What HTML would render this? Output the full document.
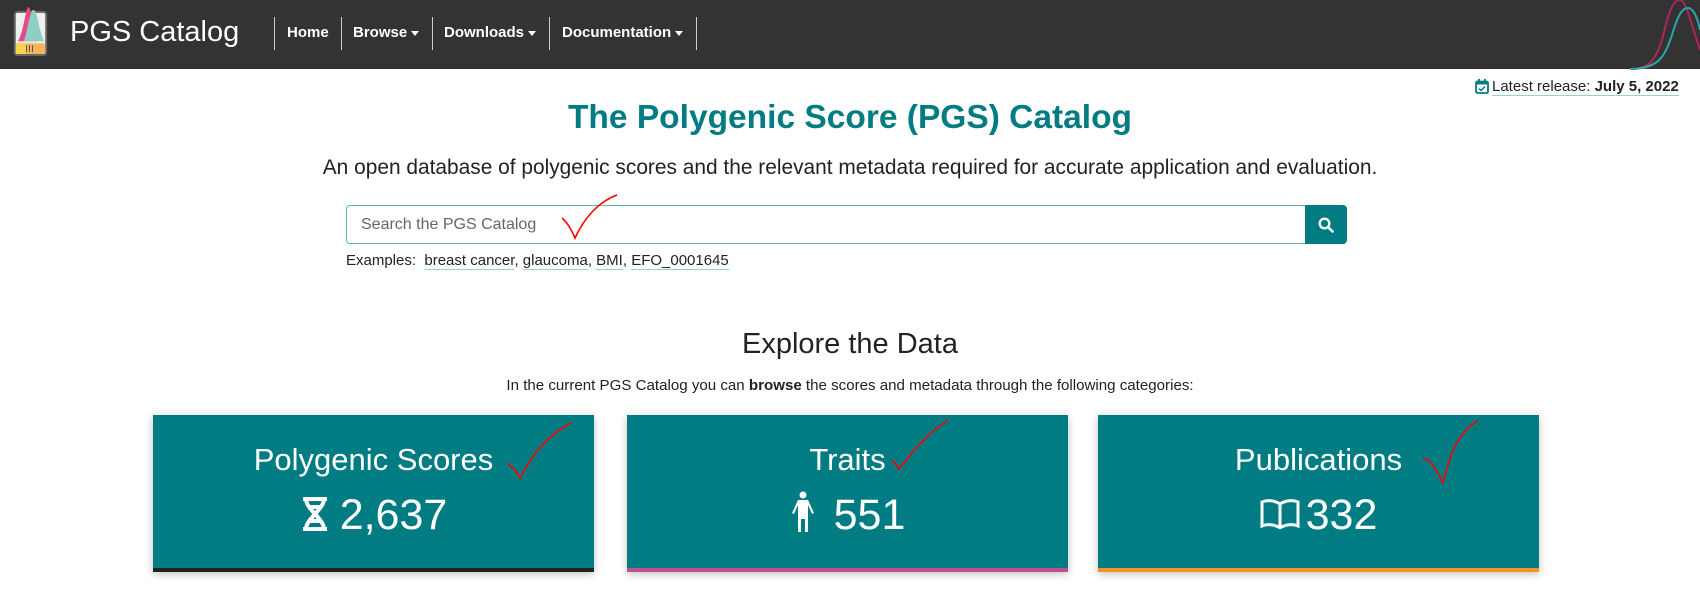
<!DOCTYPE html>
<html><head><meta charset="utf-8"><style>
*{box-sizing:border-box;margin:0;padding:0}
body{width:1700px;height:597px;overflow:hidden;background:#fff;font-family:"Liberation Sans",Arial,sans-serif;color:#222;position:relative}
.nav{position:absolute;left:0;top:0;width:1700px;height:69px;background:#333;}
.brand{position:absolute;left:70px;top:16px;color:#fff;font-size:29px}
.sep{position:absolute;top:17px;height:33px;border-left:1px solid #ccc}
.ni{position:absolute;top:24px;color:#fff;font-weight:bold;font-size:15px}
.caret{display:inline-block;border-left:4px solid transparent;border-right:4px solid transparent;border-top:5px solid #fff;vertical-align:middle;margin-left:4px}
.abs{position:absolute}
.card{position:absolute;top:415px;width:441px;height:157px;background:#007c82;box-shadow:0 2px 8px rgba(0,0,0,.25);color:#fff;text-align:center}
.card .t{position:absolute;left:0;right:0;top:27px;font-size:31px}
.card .n{position:absolute;left:0;right:0;top:76px;font-size:43px}
.card .b{position:absolute;left:0;right:0;bottom:0;height:4px}
a.u{color:#222;text-decoration:none;border-bottom:1px solid #8fd3dc}
</style></head><body>
<div class="nav">
<svg class="abs" style="left:13px;top:4px" width="35" height="53" viewBox="0 0 34 54">
<rect x="1" y="8" width="32" height="44" rx="3" fill="#eee" stroke="#666" stroke-width="2"/>
<path d="M4 38 C10 30 12 3 15 3 C18 3 20 30 24 38Z" fill="#e8478b"/>
<path d="M10 38 C14 30 16 6 20 6 C24 6 26 30 31 38Z" fill="#8ecfc4"/>
<rect x="2" y="40" width="30" height="11" rx="2" fill="#f8b45c"/>
<rect x="2" y="40" width="10" height="11" fill="#f6d34b"/>
<path d="M13 42v7M16 42v7M19 42v7" stroke="#555" stroke-width="1"/>
</svg>
<div class="brand">PGS Catalog</div>
<div class="sep" style="left:274px"></div>
<div class="ni" style="left:287px">Home</div>
<div class="sep" style="left:341px"></div>
<div class="ni" style="left:353px">Browse<span class="caret"></span></div>
<div class="sep" style="left:432px"></div>
<div class="ni" style="left:444px">Downloads<span class="caret"></span></div>
<div class="sep" style="left:549px"></div>
<div class="ni" style="left:562px">Documentation<span class="caret"></span></div>
<div class="sep" style="left:696px"></div>
<svg class="abs" style="left:1620px;top:0" width="80" height="70" viewBox="0 0 80 70">
<path d="M10 69 C30 69 35 60 42 40 C48 15 52 0 60 0 C66 0 70 20 80 50" fill="none" stroke="#b0245e" stroke-width="2"/>
<path d="M10 69 C40 69 45 55 52 35 C58 15 62 8 68 8 C74 8 78 20 80 30" fill="none" stroke="#2aa6a8" stroke-width="2"/>
</svg>
</div>
<svg class="abs" style="left:1475px;top:79px" width="14" height="15" viewBox="0 0 14 15"><rect x="1" y="2.5" width="12" height="11.5" rx="1.5" fill="none" stroke="#007c82" stroke-width="1.8"/><rect x="1" y="2.5" width="12" height="3" fill="#007c82"/><path d="M4 0v4M10 0v4" stroke="#007c82" stroke-width="1.8"/><path d="M4 9.5l2 2 4-4" stroke="#007c82" stroke-width="1.5" fill="none"/></svg>
<div class="abs" style="left:1492px;top:78px;font-size:15px;border-bottom:1px solid #8fd3dc">Latest release: <b>July 5, 2022</b></div>
<div class="abs" style="left:0;width:1700px;top:99px;text-align:center;color:#007c82;font-weight:bold;font-size:33.5px">The Polygenic Score (PGS) Catalog</div>
<div class="abs" style="left:0;width:1700px;top:156px;text-align:center;font-size:20.9px">An open database of polygenic scores and the relevant metadata required for accurate application and evaluation.</div>
<div class="abs" style="left:346px;top:205px;width:960px;height:39px;border:1px solid #5fb3b8;border-radius:4px 0 0 4px;padding:10px 14px;font-size:16px;color:#666">Search the PGS Catalog</div>
<div class="abs" style="left:1305px;top:205px;width:42px;height:39px;background:#007c82;border-radius:0 4px 4px 0"><svg style="position:absolute;left:13px;top:12px" width="16" height="16" viewBox="0 0 16 16"><circle cx="6.5" cy="6.5" r="4.8" fill="none" stroke="#fff" stroke-width="2.3"/><path d="M10 10l4.5 4.5" stroke="#fff" stroke-width="2.6" stroke-linecap="round"/></svg></div>
<div class="abs" style="left:346px;top:252px;font-size:15px">Examples:&nbsp; <a class="u">breast cancer</a>, <a class="u">glaucoma</a>, <a class="u">BMI</a>, <a class="u">EFO_0001645</a></div>
<svg class="abs" style="left:560px;top:193px" width="60" height="48"><path d="M2 25 C8 30 12 38 15 45 C22 30 35 10 57 2" fill="none" stroke="red" stroke-width="1.6"/></svg>
<div class="abs" style="left:0;width:1700px;top:328px;text-align:center;font-size:29px">Explore the Data</div>
<div class="abs" style="left:0;width:1700px;top:377px;text-align:center;font-size:15.1px">In the current PGS Catalog you can <b>browse</b> the scores and metadata through the following categories:</div>
<div class="card" style="left:153px"><div class="t">Polygenic Scores</div><div class="n"><svg width="30" height="34" viewBox="0 0 30 34" style="vertical-align:-2px;margin-right:10px"><path d="M3 2h24M3 32h24M6 2c0 10 18 20 18 30M24 2c0 10-18 20-18 30M9 10h12M9 24h12" stroke="#fff" stroke-width="4" fill="none"/></svg>2,637</div><div class="b" style="background:#222"></div></div>
<div class="card" style="left:627px"><div class="t">Traits</div><div class="n"><svg width="26" height="42" viewBox="0 0 26 42" style="vertical-align:-4px;margin-right:18px"><circle cx="13" cy="4" r="3.5" fill="#fff"/><path d="M8 9h10l6 13-2 1-4-9v27h-3V28h-4v13H8V14l-4 9-2-1z" fill="#fff"/></svg>551</div><div class="b" style="background:#c0508a"></div></div>
<div class="card" style="left:1098px"><div class="t">Publications</div><div class="n"><svg width="40" height="30" viewBox="0 0 40 30" style="vertical-align:0;margin-right:6px"><path d="M20 5C14 1 7 1 2 3v24c5-2 12-2 18 2 6-4 13-4 18-2V3c-5-2-12-2-18 2zM20 5v24" fill="none" stroke="#fff" stroke-width="3"/></svg>332</div><div class="b" style="background:#f39425"></div></div>
<svg class="abs" style="left:505px;top:420px" width="70" height="70"><path d="M2 43 C8 47 12 52 15 58 C22 45 35 20 66 3" fill="none" stroke="red" stroke-width="1.6"/></svg>
<svg class="abs" style="left:890px;top:415px" width="60" height="60"><path d="M2 45 C5 48 7 51 9 54 C20 40 35 20 58 5" fill="none" stroke="red" stroke-width="1.6"/></svg>
<svg class="abs" style="left:1420px;top:418px" width="60" height="70"><path d="M3 40 C10 42 14 47 23 65 C28 45 35 15 58 3" fill="none" stroke="red" stroke-width="1.6"/></svg>
</body></html>
